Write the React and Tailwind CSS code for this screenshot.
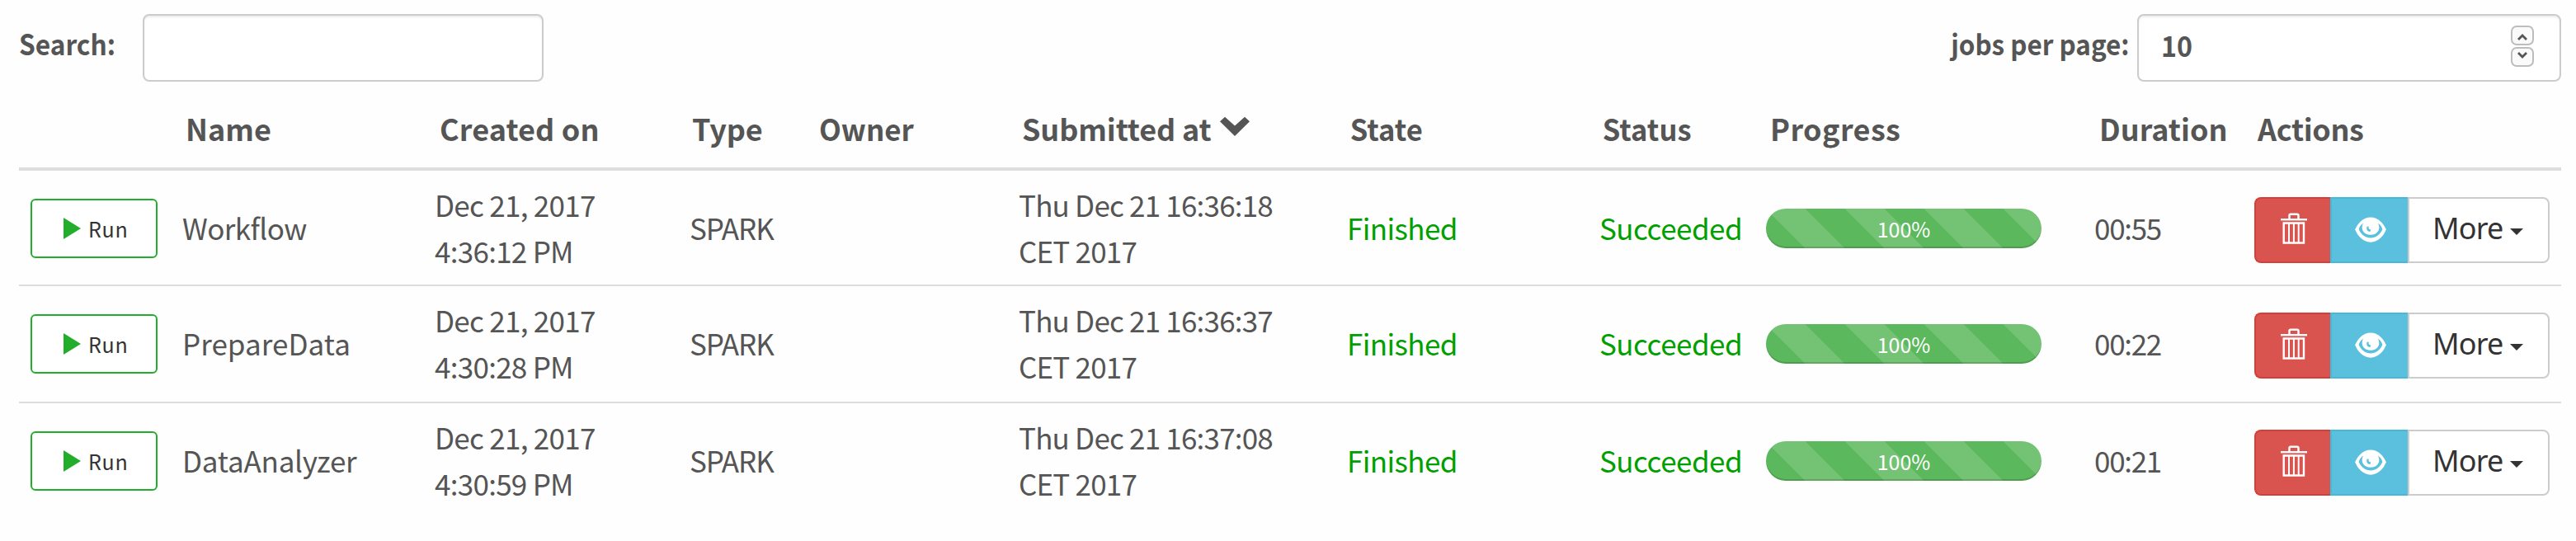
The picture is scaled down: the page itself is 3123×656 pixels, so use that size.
const jobs = [
  {
    name: 'Workflow', nameTracking: 'tracking-[-0.57px]',
    created: ['Dec 21, 2017', '4:36:12 PM'],
    submitted: ['Thu Dec 21 16:36:18', 'CET 2017'],
    duration: '00:55',
  },
  {
    name: 'PrepareData', nameTracking: 'tracking-[0.04px]',
    created: ['Dec 21, 2017', '4:30:28 PM'],
    submitted: ['Thu Dec 21 16:36:37', 'CET 2017'],
    duration: '00:22',
  },
  {
    name: 'DataAnalyzer', nameTracking: 'tracking-[-0.22px]',
    created: ['Dec 21, 2017', '4:30:59 PM'],
    submitted: ['Thu Dec 21 16:37:08', 'CET 2017'],
    duration: '00:21',
  },
];

const columns =
  'grid grid-cols-[184px_304px_311px_154px_245px_397px_307px_202px_398px_194px_358px] items-start pl-[14px] whitespace-nowrap';

function SortIcon() {
  return (
    <svg className="mt-[14px] ml-[10px] h-6 w-9" viewBox="0 0 36 24" fill="currentColor">
      <path d="M0 6.300 6 .7 18 11.500 30 .7 36 6.300 18 24z" />
    </svg>
  );
}

function TrashIcon() {
  return (
    <svg className="h-[38px] w-8" viewBox="0 0 32 38" fill="none" stroke="#fff">
      <path strokeWidth="2.400" d="M10.500 7.500V3.200Q10.500 1.700 12 1.700h8Q21.500 1.700 21.500 3.200V7.500" />
      <path strokeWidth="2.400" d="M0 8.200h32" />
      <path strokeWidth="2.400" d="M3.700 12.500h24.300v24H3.700z" />
      <path strokeWidth="2" d="M10 12.500v24M15.900 12.500v24M21.700 12.500v24" />
    </svg>
  );
}

function EyeIcon() {
  return (
    <svg className="h-[31px] w-[38px]" viewBox="0 0 38 31">
      <path fill="#fff" d="M19 .4C28 .4 35 8 37.800 15.300 35 23 28 30.700 19 30.700S3 23 .200 15.300C3 8 10 .4 19 .4z" />
      <path fill="#5bc0de" d="M10 7.500C6.500 10 5 13 4.700 15.300 7.500 21.500 13 25.600 19 25.600s11.500-4.100 14.300-10.300C33 13 31.500 10 28 7.500 32 16 26.500 21.800 19 21.800S6 16 10 7.500z" />
      <path fill="#5bc0de" d="M14.800 11.500c-1.600 3.400.5 6.800 4 6.300l.3-2.400c-2 .1-3.100-1.500-2.300-3.600z" />
    </svg>
  );
}

function StepButton({ up }) {
  return (
    <div className="flex h-6 w-7 items-center justify-center rounded-[7px] border-2 border-[#bdbdbd] bg-[#fafafa]">
      <svg className={up ? 'mt-[3px] h-2 w-3' : 'mb-[5px] h-2 w-3'} viewBox="0 0 12 8" fill="none" stroke="#555" strokeWidth="2.800">
        <path d={up ? 'M1 7 6 2l5 5' : 'M1 1l5 5 5-5'} />
      </svg>
    </div>
  );
}

function Toolbar() {
  return (
    <div className="flex h-[99px] items-start text-[34.500px] leading-[56px] font-bold">
      <label className="mt-6 w-[150px] origin-left scale-x-[0.918]">Search:</label>
      <div className="mt-[17px] h-[82px] w-[486px] rounded-[8px] border-2 border-[#ccc] bg-white shadow-[inset_0_2px_2px_rgba(0,0,0,0.075)]" />
      <label className="mt-6 mr-[9px] ml-auto origin-right scale-x-[0.911]">jobs per page:</label>
      <div className="mt-[17px] flex h-[82px] w-[514px] justify-between rounded-[8px] border-2 border-[#ccc] bg-white pr-[31px] pl-[27px] shadow-[inset_0_2px_2px_rgba(0,0,0,0.075)]">
        <span className="mt-[7px] origin-left scale-x-[0.920] text-[35px]">10</span>
        <div className="mt-3 flex flex-col gap-[2px]">
          <StepButton up />
          <StepButton />
        </div>
      </div>
    </div>
  );
}

function JobRow({ job }) {
  return (
    <div className={columns}>
      <button className="mt-[34px] flex h-[72px] w-[154px] items-center rounded-[6px] border-2 border-[#22ae2c] bg-white pl-[38px] text-[25px] leading-9 text-[#333]">
        <svg className="h-[26px] w-[21px]" viewBox="0 0 21 26" fill="#22ae2c">
          <path d="M0 0 21 13 0 26z" />
        </svg>
        <span className="ml-[9px] tracking-[0.700px]">Run</span>
      </button>
      <div className={`mt-[41px] ${job.nameTracking}`}>{job.name}</div>
      <div className="mt-[13px] mb-[13px] pl-[2px] tracking-[-0.720px]">
        <div>{job.created[0]}</div>
        <div>{job.created[1]}</div>
      </div>
      <div className="mt-[41px] tracking-[-1.100px]">SPARK</div>
      <div />
      <div className="mt-[13px] tracking-[-0.800px]">
        <div>{job.submitted[0]}</div>
        <div>{job.submitted[1]}</div>
      </div>
      <div className="mt-[41px] pl-px tracking-[-0.600px] text-[#00a000]">Finished</div>
      <div className="mt-[41px] tracking-[-0.500px] text-[#00a000]">Succeeded</div>
      <div className="mt-[46px] h-12 w-[334px] rounded-[24px] bg-[#5cb85c] bg-[linear-gradient(45deg,rgba(255,255,255,.15)_25%,transparent_25%,transparent_50%,rgba(255,255,255,.15)_50%,rgba(255,255,255,.15)_75%,transparent_75%)] bg-[length:96px_96px] text-center text-[25px] leading-[49px] text-white shadow-[inset_0_-2px_0_rgba(0,0,0,0.15)]">
        100%
      </div>
      <div className="mt-[41px] tracking-[-1.300px]">{job.duration}</div>
      <div className="mt-8 flex h-20">
        <button className="flex w-[92px] items-center justify-center rounded-l-[8px] border-2 border-r-0 border-[#d43f3a] bg-[#d9534f] pb-1 pl-[2px]">
          <TrashIcon />
        </button>
        <button className="flex w-[94px] items-center justify-center border-2 border-r-0 border-[#46b8da] bg-[#5bc0de] pb-[2px] pl-[2px]">
          <EyeIcon />
        </button>
        <button className="flex w-[172px] items-start rounded-r-[8px] border-2 border-[#ccc] bg-white pt-2 pl-[28px] font-['Noto_Sans',sans-serif] text-[36px] leading-[56px] tracking-[-0.900px] text-[#333]">
          More
          <svg className="mt-[28px] ml-[9px] h-2 w-4" viewBox="0 0 16 8" fill="#333">
            <path d="M0 0h16L8 8z" />
          </svg>
        </button>
      </div>
    </div>
  );
}

export default function App() {
  return (
    <div className="h-[656px] w-[3123px] overflow-hidden bg-[#fefefe] pr-[18px] pl-[23px] font-['Noto_Sans_CJK_SC',sans-serif] text-[35px] leading-[56px] text-[#555]">
      <Toolbar />
      <div className={`${columns} h-[108px] border-b-4 border-[#ddd] pt-[28px] text-[36px] font-bold`}>
        <div />
        <div className="pl-[4px]">Name</div>
        <div className="pl-[8px] tracking-[0.140px]">Created on</div>
        <div className="pl-[3px] tracking-[-0.200px]">Type</div>
        <div className="origin-left scale-x-[0.970] pl-[3px]">Owner</div>
        <div className="flex pl-[4px] tracking-[-0.120px]">
          Submitted at
          <SortIcon />
        </div>
        <div className="origin-left scale-x-[0.960] pl-[5px]">State</div>
        <div className="origin-left scale-x-[0.960] pl-[4px]">Status</div>
        <div className="pl-[5px] tracking-[0.400px]">Progress</div>
        <div className="pl-[6px]">Duration</div>
        <div className="pl-[4px] tracking-[-0.370px]">Actions</div>
      </div>
      <div className="h-[140px] border-b-2 border-[#ddd]"><JobRow job={jobs[0]} /></div>
      <div className="h-[142px] border-b-2 border-[#ddd]"><JobRow job={jobs[1]} /></div>
      <JobRow job={jobs[2]} />
    </div>
  );
}
